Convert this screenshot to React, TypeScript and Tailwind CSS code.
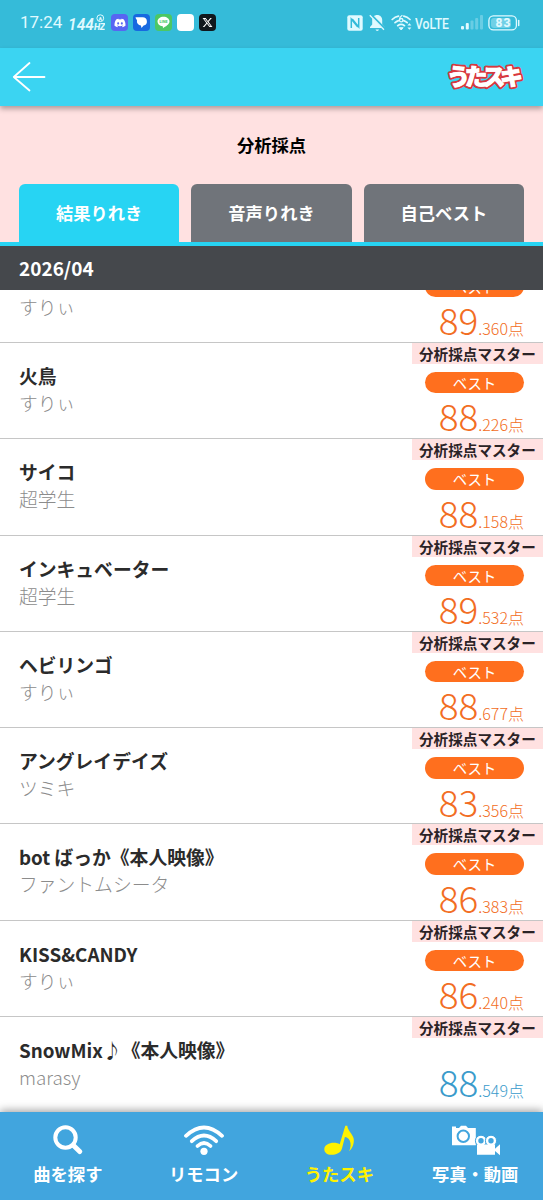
import React from 'react';
import clsx from 'clsx';
import { FaDiscord, FaXTwitter, FaLine } from 'react-icons/fa6';

const songs = [
  { title: 'テレキャスタービーボーイ', artist: 'すりぃ', score: '89', decimal: '.360', best: true },
  { title: '火鳥', artist: 'すりぃ', score: '88', decimal: '.226', best: true },
  { title: 'サイコ', artist: '超学生', score: '88', decimal: '.158', best: true },
  { title: 'インキュベーター', artist: '超学生', score: '89', decimal: '.532', best: true },
  { title: 'ヘビリンゴ', artist: 'すりぃ', score: '88', decimal: '.677', best: true },
  { title: 'アングレイデイズ', artist: 'ツミキ', score: '83', decimal: '.356', best: true },
  { title: 'bot ばっか《本人映像》', artist: 'ファントムシータ', score: '86', decimal: '.383', best: true },
  { title: 'KISS&CANDY', artist: 'すりぃ', score: '86', decimal: '.240', best: true },
  { title: 'SnowMix♪《本人映像》', artist: 'marasy', score: '88', decimal: '.549', best: false },
];

const tabs = ['結果りれき', '音声りれき', '自己ベスト'];

function StatusBar() {
  return (
    <div className="flex h-12 shrink-0 items-center justify-between bg-[#35bbd9] pt-[-2px] pr-[22px] pb-[3px] pl-5 font-['Roboto',sans-serif] text-[#e0faff]">
      <div className="flex items-center">
        <span className="w-[43px] text-[17px] leading-none whitespace-nowrap">17:24</span>
        <svg width="37" height="18" viewBox="0 0 37 18" className="ml-[5px]" fill="currentColor">
          <text x="0" y="16" fontSize="17" fontWeight="600" fontStyle="italic" textLength="26" lengthAdjust="spacingAndGlyphs">144</text>
          <text x="26" y="16" fontSize="9" fontWeight="800" fontStyle="italic" textLength="11">HZ</text>
          <circle cx="32.3" cy="4.2" r="3.4" fill="none" stroke="currentColor" />
          <text x="30.2" y="6.5" fontSize="6" fontWeight="700">A</text>
        </svg>
        <div className="ml-[6px] flex gap-[5px]">
          <div className="flex size-[17px] items-center justify-center rounded bg-[#5865f2] text-white">
            <FaDiscord size={12} />
          </div>
          <div className="flex size-[17px] items-center justify-center rounded bg-[#1769e0]">
            <svg width="13" height="13" viewBox="0 0 13 13" fill="#fff">
              <path d="M1 1.2h6.6a4.2 4.2 0 0 1 1 8.3L6.5 12 5.9 9.6A4.4 4.4 0 0 1 2 4.2L.6 2.1Q.2 1.2 1 1.2z" />
            </svg>
          </div>
          <div className="flex size-[17px] items-center justify-center rounded bg-[#4cc764]">
            <svg width="13" height="13" viewBox="0 0 13 13">
              <path d="M6.5.8C3.2.8.5 2.9.5 5.6c0 2.4 2.1 4.4 5 4.7.6.1.5.7.4 1.9 2.6-1.5 6.6-3.6 6.6-6.6C12.500 2.900 9.800.8 6.500.8z" fill="#fff" />
              <text x="2.4" y="7.2" fontSize="3.8" fontWeight="800" fill="#4cc764" textLength="8.200">LINE</text>
            </svg>
          </div>
          <div className="size-[17px] rounded bg-white" />
          <div className="flex size-[17px] items-center justify-center rounded bg-[#10171c] text-white">
            <FaXTwitter size={11} />
          </div>
        </div>
      </div>

      <div className="flex items-center">
        <svg width="16" height="16" viewBox="0 0 16 16">
          <rect x=".3" y=".3" width="15.400" height="15.400" rx="2" fill="currentColor" />
          <path d="M4.300 13V4l6.500 8M11.700 3v9L5.200 4" fill="none" stroke="#35bbd9" strokeWidth="1.500" />
        </svg>
        <svg width="17" height="18" viewBox="0 0 17 18" className="ml-[6px]">
          <path d="M8.200 1c-3 0-5 2.200-5 5v4.500L1 13v1h14.500v-1l-2.300-2.500V6c0-2.800-2-5-5-5zM6.500 15.500h3.500a1.800 1.800 0 0 1-3.500 0z" fill="currentColor" />
          <path d="M1.800.8 16 15.200" stroke="#35bbd9" strokeWidth="2.600" />
          <path d="M.8 1.300 15 15.800" stroke="currentColor" strokeWidth="1.300" />
        </svg>
        <svg width="22" height="18" viewBox="0 0 22 18" className="ml-[5px]" fill="none" stroke="currentColor" strokeWidth="1.700" strokeLinecap="round">
          <path d="M1.200 5.500Q4 2.800 7.500 2.200M12.800 2.200Q16.200 2.800 19 5.500" />
          <path d="M4 8.700Q6 7 7.500 6.600M12.700 6.600Q14.600 7.200 16.200 8.700" />
          <path d="M6.700 11.700q3.400-2.600 6.800 0" />
          <path d="M11 1.500Q8.500 3 8.500 5.700" strokeWidth="1.300" />
          <circle cx="10.200" cy="6.200" r="1.700" strokeWidth="1.300" />
          <path d="m8.500 14 1.700 2 1.700-2z" fill="currentColor" strokeWidth="1" />
          <path d="m16.400 11.500 2-2.300 2 2.300zM16.400 13.500l2 2.300 2-2.300z" fill="currentColor" stroke="none" />
        </svg>
        <svg width="35" height="14" viewBox="0 0 35 14" className="ml-[2px]" fill="currentColor">
          <text x="0" y="12.500" fontSize="14.500" fontWeight="500" textLength="34" lengthAdjust="spacingAndGlyphs">VoLTE</text>
        </svg>
        <svg width="22" height="15" viewBox="0 0 22 15" className="ml-[11px]" fill="currentColor">
          <rect x="0" y="11" width="3" height="3.500" rx="1" />
          <rect x="4.800" y="8" width="3" height="6.500" rx="1" />
          <rect x="9.500" y="5.500" width="3" height="9" rx="1" opacity=".3" />
          <rect x="14.200" y="3" width="3" height="11.500" rx="1" opacity=".3" />
          <rect x="19" y="0" width="3" height="14.500" rx="1" opacity=".3" />
        </svg>
        <svg width="33" height="16" viewBox="0 0 33 16" className="ml-[5px]">
          <rect x=".9" y=".9" width="27.500" height="14" rx="4.500" fill="none" stroke="currentColor" strokeWidth="1.300" />
          <rect x="3" y="3" width="20" height="10" rx="3" fill="currentColor" opacity=".35" />
          <path d="M30.700 5.500v5" stroke="currentColor" strokeWidth="1.500" strokeLinecap="round" />
          <text x="7.500" y="12.300" fontSize="12" fontWeight="800" fill="currentColor" textLength="15">83</text>
        </svg>
      </div>
    </div>
  );
}

function Header() {
  return (
    <header className="z-10 flex h-[58px] shrink-0 items-center justify-between bg-[#3bd4f2] pr-[18px] pl-3 shadow-[0_3px_5px_rgba(0,0,0,0.3)]">
      <svg width="34" height="32" viewBox="0 0 34 32" fill="none" stroke="#fff" strokeWidth="1.800" strokeLinecap="round" strokeLinejoin="round">
        <path d="M32.500 16H1.800M17.500 2 1.800 16l15.700 13.500" />
      </svg>
      <svg width="80" height="34" viewBox="0 0 80 34" className="font-['Noto_Sans_CJK_JP',sans-serif]">
        <g
          fill="#fff"
          stroke="#d8383f"
          strokeWidth="4.500"
          strokeLinejoin="round"
          paintOrder="stroke"
          fontWeight="900"
          fontSize="23"
        >
          <text x="2" y="25" textLength="76" lengthAdjust="spacing">うたスキ</text>
        </g>
        <text x="2" y="25" fill="#fff" stroke="#fff" strokeWidth=".7" fontWeight="900" fontSize="23" textLength="76" lengthAdjust="spacing">うたスキ</text>
      </svg>
    </header>
  );
}

function SongRow({ song }: { song: (typeof songs)[number] }) {
  return (
    <li className="flex h-[96.3px] shrink-0 justify-between border-b-[1.5px] border-[#c6c6c6] bg-white">
      <div className="pt-[19px] pl-[19px] text-[18.8px] leading-[27px]">
        <p className="font-bold text-[#2b2b2b]">{song.title}</p>
        <p className="font-light text-[#8c8c8c]">{song.artist}</p>
      </div>
      <div className="flex w-[131px] flex-col">
        <div className="h-[21px] bg-[#ffe1e1] pl-[7px] text-[14.600px] leading-[21px] font-bold whitespace-nowrap text-[#2b2326]">
          分析採点マスター
        </div>
        <div className="h-[30px] pt-2 pl-[13px]">
          {song.best && (
            <div className="h-[21.500px] w-[99px] rounded-full bg-[#ff6f1e] text-center text-[14.400px] leading-[21px] text-white">
              ベスト
            </div>
          )}
        </div>
        <div
          className={clsx(
            'flex items-baseline justify-end pr-[19px] leading-[44px] whitespace-nowrap',
            song.best ? 'text-[#f26d23]' : 'text-[#3a9bcb]'
          )}
        >
          <span className="text-[37px] font-light">{song.score}</span>
          <span className="text-[16px] font-light">{song.decimal}点</span>
        </div>
      </div>
    </li>
  );
}

function BottomNav() {
  return (
    <nav className="z-10 grid h-[88px] shrink-0 grid-cols-4 bg-[#41a5de] text-[17.300px] leading-6 font-bold text-white shadow-[0_-2px_8px_rgba(0,0,0,0.35)]">
      <div className="flex flex-col items-center pt-3">
        <svg width="30" height="32" viewBox="0 0 30 32" fill="none" stroke="currentColor" strokeLinecap="round">
          <circle cx="12.500" cy="13.500" r="10.200" strokeWidth="4" />
          <path d="m20.500 21.500 6.200 6" strokeWidth="5" />
        </svg>
        <span className="mt-[6px]">曲を探す</span>
      </div>
      <div className="flex flex-col items-center pt-3">
        <svg width="42" height="32" viewBox="0 0 42 32" fill="none" stroke="currentColor" strokeWidth="3.800" strokeLinecap="round">
          <path d="M3 11.800Q21-5 39 11.800" />
          <path d="M8.800 17.200Q21 5.800 33.200 17.200" />
          <path d="M14.500 22Q21 15.800 27.500 22" />
          <circle cx="21" cy="27.300" r="3.600" fill="currentColor" stroke="none" />
        </svg>
        <span className="mt-[6px]">リモコン</span>
      </div>
      <div className="flex flex-col items-center pt-3 text-[#fff200]">
        <svg width="32" height="32" viewBox="0 0 32 32" fill="currentColor">
          <path d="M22.300 1.800h2c.2 4.500 5.500 8.500 6.400 13 .7 4.800-1.300 9.500-4.500 12.400 1.500-3.600 2-7.200.5-10.600-1-2.200-3-3.500-4.800-3.600L19 24.500c-1.300 4.500-6 6.300-10.500 6.300C4 30.800 1.200 28.500 1.300 25c.2-4 5-6.300 9.700-6.200 2.200 0 4.200.5 5.700 1.500z" />
        </svg>
        <span className="mt-[6px]">うたスキ</span>
      </div>
      <div className="flex flex-col items-center pt-3">
        <svg width="50" height="32" viewBox="0 0 50 32" fill="currentColor">
          <path d="M2 2.500h4V4h3l2-2.200h5L18 4h7.800v17.300H2zM1.500 4.200h4" />
          <circle cx="13.300" cy="12.300" r="5.700" fill="none" stroke="#41a5de" strokeWidth="2" />
          <g stroke="#41a5de" strokeWidth="1">
            <circle cx="31" cy="16.800" r="5.600" />
            <circle cx="41" cy="16.800" r="5.600" />
          </g>
          <path d="M27 20.500h18v4.300l5-4.500v11l-5-4.200v3.700H27z" />
          <circle cx="31" cy="16.800" r="2.700" fill="#41a5de" />
          <circle cx="41" cy="16.800" r="2.700" fill="#41a5de" />
        </svg>
        <span className="mt-[6px]">写真・動画</span>
      </div>
    </nav>
  );
}

export default function App() {
  return (
    <div className="flex h-[1200px] w-[543px] flex-col overflow-hidden bg-white font-['Noto_Sans_CJK_JP',sans-serif]">
      <StatusBar />
      <Header />

      {/* タイトルとタブ */}
      <section className="flex h-[140px] shrink-0 flex-col justify-between border-b-4 border-[#27d4f3] bg-[#ffe1e1]">
        <h1 className="pt-[26px] text-center text-[17.300px] leading-[26px] font-bold text-black">分析採点</h1>
        <div className="grid h-[58px] grid-cols-3 gap-3 px-[19px]">
          {tabs.map((tab, index) => (
            <div
              key={tab}
              className={clsx(
                'rounded-t-md text-center text-[17.300px] leading-[58px] font-bold text-white',
                index === 0 ? 'bg-[#27d4f3]' : 'bg-[#70747a]'
              )}
            >
              {tab}
            </div>
          ))}
        </div>
      </section>

      <div className="z-10 h-11 shrink-0 bg-[#45484c] pl-[19px] text-[19px] leading-11 font-bold text-white">2026/04</div>

      {/* 採点履歴 */}
      <ul className="flex min-h-0 flex-1 flex-col overflow-hidden">
        <li className="-mt-[43.400px] shrink-0">
          <ul>
            {songs.map((song, index) => (
              <SongRow key={index} song={song} />
            ))}
          </ul>
        </li>
      </ul>

      <BottomNav />
    </div>
  );
}
